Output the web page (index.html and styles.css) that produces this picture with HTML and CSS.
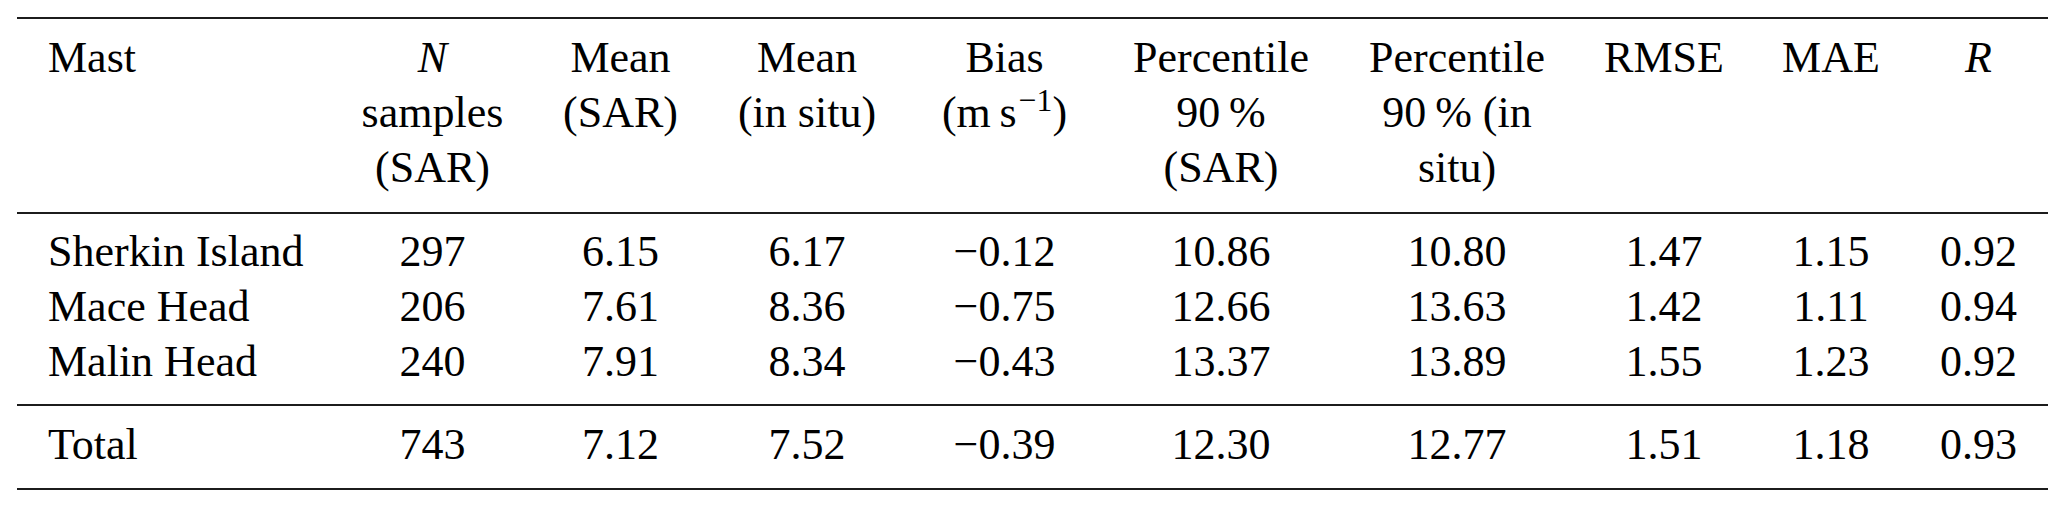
FILE: index.html
```html
<!DOCTYPE html>
<html lang="en">
<head>
<meta charset="utf-8">
<title>SAR wind speed validation</title>
<link rel="stylesheet" href="styles.css">
</head>
<body>
<table class="stats">
  <thead>
    <tr>
      <th class="c1 name">Mast</th>
      <th class="c2"><i>N</i> samples (SAR)</th>
      <th class="c3">Mean (SAR)</th>
      <th class="c4">Mean (in situ)</th>
      <th class="c5">Bias <span class="unit">(m&thinsp;s<sup>&minus;1</sup>)</span></th>
      <th class="c6">Percentile 90&thinsp;% (SAR)</th>
      <th class="c7">Percentile 90&thinsp;% (in situ)</th>
      <th class="c8">RMSE</th>
      <th class="c9">MAE</th>
      <th class="c10"><i>R</i></th>
    </tr>
  </thead>
  <tbody class="sites">
    <tr class="first">
      <td class="name">Sherkin Island</td><td>297</td><td>6.15</td><td>6.17</td><td>&minus;0.12</td><td>10.86</td><td>10.80</td><td>1.47</td><td>1.15</td><td>0.92</td>
    </tr>
    <tr>
      <td class="name">Mace Head</td><td>206</td><td>7.61</td><td>8.36</td><td>&minus;0.75</td><td>12.66</td><td>13.63</td><td>1.42</td><td>1.11</td><td>0.94</td>
    </tr>
    <tr class="last">
      <td class="name">Malin Head</td><td>240</td><td>7.91</td><td>8.34</td><td>&minus;0.43</td><td>13.37</td><td>13.89</td><td>1.55</td><td>1.23</td><td>0.92</td>
    </tr>
  </tbody>
  <tbody class="total">
    <tr>
      <td class="name">Total</td><td>743</td><td>7.12</td><td>7.52</td><td>&minus;0.39</td><td>12.30</td><td>12.77</td><td>1.51</td><td>1.18</td><td>0.93</td>
    </tr>
  </tbody>
</table>
</body>
</html>
```

FILE: styles.css
```css
html, body {
  margin: 0;
  padding: 0;
  background: #ffffff;
}

body {
  padding: 17px 0 0 17px;
}

.stats {
  font-family: "Liberation Serif", "Times New Roman", serif;
  font-size: 44px;
  line-height: 55px;
  color: #000;
  border-collapse: separate;
  border-spacing: 0;
  table-layout: fixed;
  width: 2031px;
}

.stats th,
.stats td {
  box-sizing: border-box;
  padding: 0 20px;
  text-align: center;
  vertical-align: top;
  font-weight: normal;
  white-space: normal;
}

.stats .name {
  text-align: left;
  padding-left: 31px;
}

.stats thead th {
  border-top: 2px solid #1c1c1c;
  border-bottom: 2px solid #1c1c1c;
  padding-top: 11px;
  padding-bottom: 17px;
}

.stats .unit {
  white-space: nowrap;
}

.stats sup {
  font-size: 0.72em;
  line-height: 0;
  vertical-align: 0.5em;
  margin-left: 2px;
}

.stats i {
  font-style: italic;
}

.sites .first td {
  padding-top: 10px;
}

.sites .last td {
  padding-bottom: 15px;
}

.total td {
  border-top: 2px solid #1c1c1c;
  border-bottom: 2px solid #1c1c1c;
  padding-top: 11px;
  padding-bottom: 16px;
}

.c1 { width: 315px; }
.c2 { width: 201px; }
.c3 { width: 175px; }
.c4 { width: 198px; }
.c5 { width: 197px; }
.c6 { width: 236px; }
.c7 { width: 236px; }
.c8 { width: 178px; }
.c9 { width: 156px; }
.c10 { width: 139px; }
```
